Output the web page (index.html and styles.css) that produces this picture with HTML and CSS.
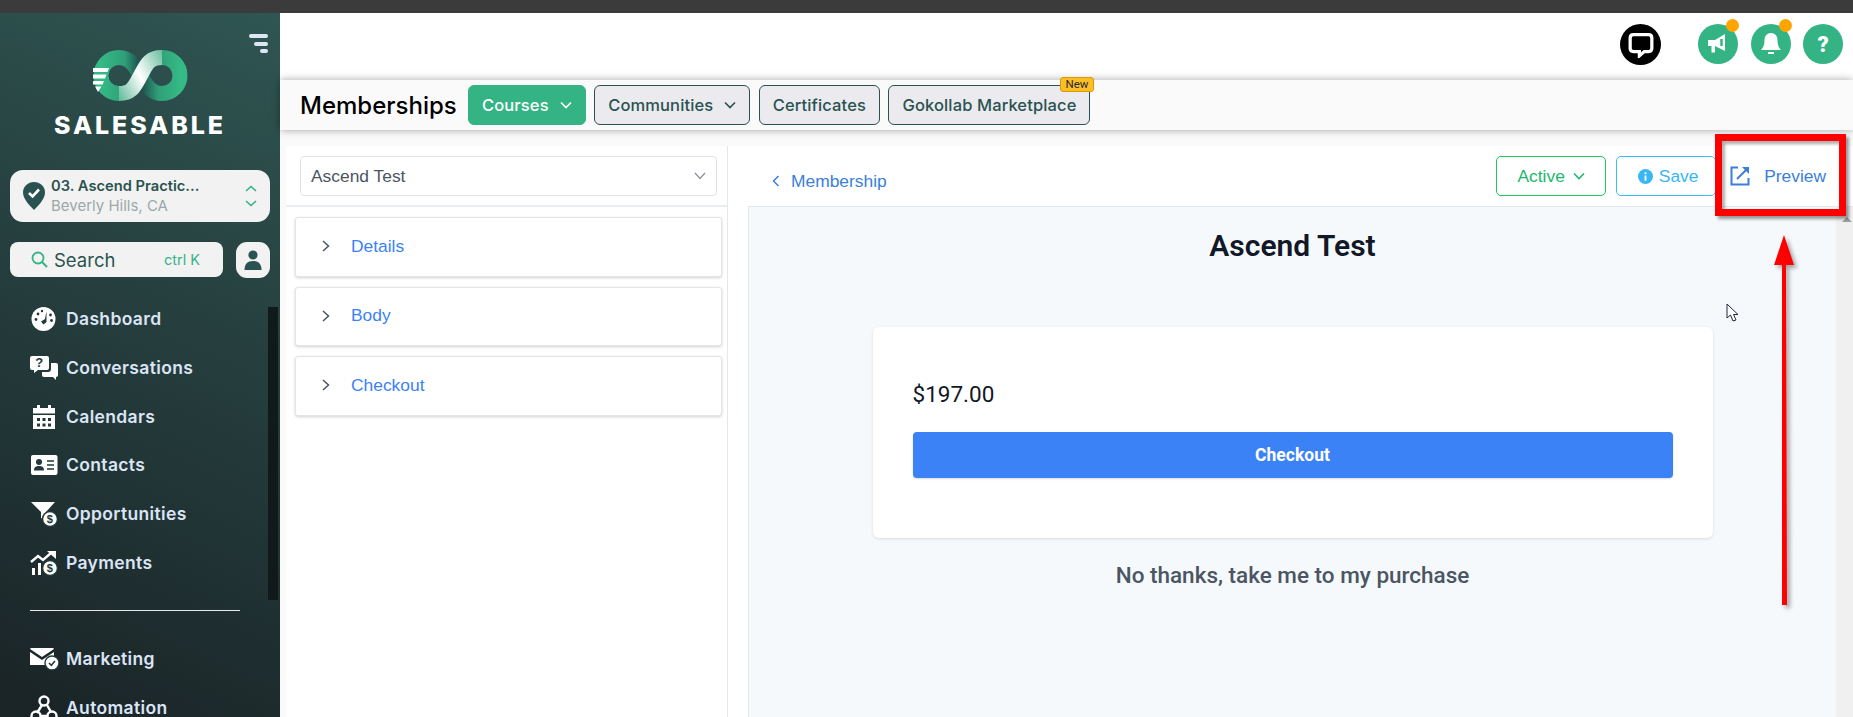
FILE: index.html
```html
<!DOCTYPE html>
<html lang="en">
<head>
  <meta charset="UTF-8" />
  <title>Memberships</title>
  <link rel="stylesheet" href="styles.css">
</head>
<body>

  <div class="window-bar"></div>

  <div class="app">

    <!-- Sidebar -->
    <aside class="sidebar">
      <svg class="side-toggle" viewBox="0 0 19 19" width="19" height="19">
        <rect x="0" y="0" width="19" height="4" rx="2" fill="#dfe7f5"/>
        <rect x="5" y="8" width="14" height="4" rx="2" fill="#dfe7f5"/>
        <rect x="11" y="15" width="8" height="4" rx="2" fill="#dfe7f5"/>
      </svg>

      <div class="brand">
        <svg class="brand-logo" viewBox="0 0 95 51" width="95" height="51">
          <defs>
            <linearGradient id="loopLeft" x1="0" y1="0" x2="1" y2="0">
              <stop offset="0" stop-color="#35b985"/>
              <stop offset="0.6" stop-color="#2f9f78"/>
              <stop offset="1" stop-color="#1d4a4a"/>
            </linearGradient>
            <linearGradient id="loopRight" x1="0" y1="0" x2="1" y2="0">
              <stop offset="0" stop-color="#1d4a4a"/>
              <stop offset="0.45" stop-color="#2f9f78"/>
              <stop offset="1" stop-color="#35b985"/>
            </linearGradient>
            <linearGradient id="band" gradientUnits="userSpaceOnUse" x1="14" y1="43" x2="80" y2="8">
              <stop offset="0" stop-color="#3aa981"/>
              <stop offset="0.5" stop-color="#ffffff"/>
              <stop offset="1" stop-color="#4db28d"/>
            </linearGradient>
          </defs>
          <path d="M47.5 25.5C41 15 37 7.5 26 7.5A18 18 0 0 0 26 43.5" fill="none" stroke="url(#loopLeft)" stroke-width="15"/>
          <path d="M69 7.5A18 18 0 0 1 69 43.5C58 43.5 54 36 47.5 25.5" fill="none" stroke="url(#loopRight)" stroke-width="15"/>
          <path d="M26 43.5C40 43.5 42 35 47.5 25.5C53 16 55 7.5 69 7.5" fill="none" stroke="url(#band)" stroke-width="15"/>
          <path d="M0 18H16L14.5 22H0ZM0 24.5H13.5L12 28.5H0ZM0 31H11L9.5 34.5H0ZM2 36.5H8.5L5 42Z" fill="#fff"/>
        </svg>
        <div class="brand-name">SALESABLE</div>
      </div>

      <div class="location">
        <svg viewBox="0 0 22 28" width="22" height="28">
          <path d="M11 0C5 0 0 4.6 0 10.5C0 17 7 24 11 28C15 24 22 17 22 10.5C22 4.6 17 0 11 0Z" fill="#2a5250"/>
          <path d="M6 11L9.6 14.5L16 7.5" fill="none" stroke="#fff" stroke-width="2.6"/>
        </svg>
        <div class="location-text">
          <div class="location-name">03. Ascend Practic...</div>
          <div class="location-city">Beverly Hills, CA</div>
        </div>
        <svg class="location-arrows" viewBox="0 0 12 22" width="12" height="22">
          <path d="M1 6L6 1.5L11 6M1 16L6 20.5L11 16" fill="none" stroke="#34b484" stroke-width="1.6"/>
        </svg>
      </div>

      <div class="search-row">
        <div class="search">
          <svg viewBox="0 0 17 17" width="17" height="17">
            <circle cx="7" cy="7" r="5.5" fill="none" stroke="#34b484" stroke-width="1.8"/>
            <path d="M11 11L16 16" stroke="#34b484" stroke-width="2"/>
          </svg>
          <span class="search-label">Search</span>
          <span class="search-key">ctrl K</span>
        </div>
        <div class="user-btn">
          <svg viewBox="0 0 18 20" width="18" height="20">
            <circle cx="9" cy="5" r="4.6" fill="#2a5250"/>
            <path d="M0.5 20C0.5 14 3.5 11 9 11C14.5 11 17.5 14 17.5 20Z" fill="#2a5250"/>
          </svg>
        </div>
      </div>

      <nav class="nav">
        <div class="nav-item">
          <svg viewBox="0 0 28 28" width="28" height="28">
            <circle cx="13.5" cy="14" r="12" fill="#fff"/>
            <path d="M16.5 6L15 14L11 16.5L13.5 19.5L16.5 17Z" fill="#22383a"/>
            <circle cx="6" cy="14.5" r="1.4" fill="#22383a"/>
            <circle cx="8" cy="9" r="1.4" fill="#22383a"/>
            <circle cx="12" cy="6" r="1.2" fill="#22383a"/>
            <circle cx="20.5" cy="10" r="1.4" fill="#22383a"/>
            <circle cx="21.5" cy="15.5" r="1.4" fill="#22383a"/>
          </svg>
          Dashboard
        </div>
        <div class="nav-item">
          <svg viewBox="0 0 30 26" width="30" height="26">
            <path d="M3 1H18Q20 1 20 3V13Q20 15 18 15H9L5 18V15H3Q1 15 1 13V3Q1 1 3 1Z" fill="#fff"/>
            <path d="M22 8H27Q29 8 29 10V20Q29 22 27 22V25L24 22H15Q13 22 13 20V17H19Q22 17 22 14Z" fill="#fff"/>
            <text x="10.5" y="12" class="icon-text">?</text>
          </svg>
          Conversations
        </div>
        <div class="nav-item">
          <svg viewBox="0 0 28 28" width="28" height="28">
            <path d="M7 2H10V5H18V2H21V5H25V10.5H3V5H7Z M3 12H25V26H3Z" fill="#fff"/>
            <g fill="#22383a">
              <rect x="7" y="15" width="3" height="3"/><rect x="12.5" y="15" width="3" height="3"/><rect x="18" y="15" width="3" height="3"/>
              <rect x="7" y="20.5" width="3" height="3"/><rect x="12.5" y="20.5" width="3" height="3"/><rect x="18" y="20.5" width="3" height="3"/>
            </g>
          </svg>
          Calendars
        </div>
        <div class="nav-item">
          <svg viewBox="0 0 28 22" width="28" height="22">
            <rect x="1" y="1" width="26.5" height="20" rx="2" fill="#fff"/>
            <circle cx="9" cy="8" r="3" fill="#22383a"/>
            <path d="M4 16.5C4 13 6 12 9 12C12 12 14 13 14 16.5Z" fill="#22383a"/>
            <path d="M17 7H24M17 11H24M17 15H24" stroke="#22383a" stroke-width="1.4"/>
          </svg>
          Contacts
        </div>
        <div class="nav-item">
          <svg viewBox="0 0 28 26" width="28" height="26">
            <path d="M1 1H25L16 11V20L11 17V11Z" fill="#fff"/>
            <circle cx="20" cy="18" r="7.5" fill="#fff" stroke="#22383a" stroke-width="1.5"/>
            <text x="20" y="22" class="icon-text icon-text-sm">$</text>
          </svg>
          Opportunities
        </div>
        <div class="nav-item">
          <svg viewBox="0 0 28 26" width="28" height="26">
            <path d="M1 12L8 6L13 10L21 3" fill="none" stroke="#fff" stroke-width="2.4"/>
            <path d="M17 1H26V9Z" fill="#fff"/>
            <rect x="2" y="18" width="3" height="7" fill="#fff"/>
            <rect x="8" y="13" width="3" height="12" fill="#fff"/>
            <circle cx="20" cy="18" r="7.5" fill="#fff" stroke="#22383a" stroke-width="1.5"/>
            <text x="20" y="22" class="icon-text icon-text-sm">$</text>
          </svg>
          Payments
        </div>
        <div class="nav-divider"></div>
        <div class="nav-item">
          <svg viewBox="0 0 30 24" width="30" height="24">
            <path d="M1 2Q1 1 3 1H23Q25 1 25 2L13 10Z" fill="#fff"/>
            <path d="M1 5L13 13L25 5V18H1Z" fill="#fff"/>
            <circle cx="23" cy="16" r="7" fill="#fff" stroke="#22383a" stroke-width="1.4"/>
            <path d="M20 16L22.3 18.3L26 14" fill="none" stroke="#22383a" stroke-width="1.5"/>
          </svg>
          Marketing
        </div>
        <div class="nav-item">
          <svg viewBox="0 0 28 28" width="28" height="28">
            <g fill="none" stroke="#fff" stroke-width="2.4">
              <circle cx="14" cy="7" r="4.5"/>
              <circle cx="6" cy="22" r="4.5"/>
              <circle cx="22" cy="22" r="4.5"/>
              <path d="M12 11L7 19M17 11L21 18M10 22H18"/>
            </g>
          </svg>
          Automation
        </div>
      </nav>

      <div class="side-scroll">
        <div class="side-scroll-thumb"></div>
      </div>
    </aside>

    <main class="main">

      <!-- Top icons -->
      <header class="topbar">
        <div class="chat-btn">
          <svg viewBox="0 0 24 24" width="26" height="26">
            <path d="M5 2.5H19Q22 2.5 22 5.5V15Q22 18 19 18H15L10.5 22V18H5Q2 18 2 15V5.5Q2 2.5 5 2.5Z" fill="none" stroke="#fff" stroke-width="3"/>
          </svg>
        </div>
        <div class="top-icons">
          <div class="round-btn has-dot">
            <svg viewBox="0 0 22 22" width="22" height="22">
              <path d="M1 7H8L18 1V18L8 13V19.5H4.5V13H1Z" fill="#fff"/>
              <path d="M14.5 6V13" stroke="#34b484" stroke-width="2.5"/>
            </svg>
          </div>
          <div class="round-btn has-dot">
            <svg viewBox="0 0 22 24" width="22" height="24">
              <path d="M11 1C7 1 4.5 4 4.5 8C4.5 13 3.5 15 1 18H21C18.5 15 17.5 13 17.5 8C17.5 4 15 1 11 1Z" fill="#fff"/>
              <path d="M8 21H14" stroke="#fff" stroke-width="2"/>
            </svg>
          </div>
          <div class="round-btn round-help">?</div>
        </div>
      </header>

      <!-- Tabs -->
      <div class="subnav">
        <h1 class="page-title">Memberships</h1>
        <div class="tabs">
          <div class="tab tab-active">Courses
            <svg viewBox="0 0 12 8" width="12" height="8"><path d="M1 1.5L6 6.5L11 1.5" fill="none" stroke="#fff" stroke-width="1.7"/></svg>
          </div>
          <div class="tab">Communities
            <svg viewBox="0 0 12 8" width="12" height="8"><path d="M1 1.5L6 6.5L11 1.5" fill="none" stroke="#2a5250" stroke-width="1.7"/></svg>
          </div>
          <div class="tab">Certificates</div>
          <div class="tab">Gokollab Marketplace<span class="tab-badge">New</span></div>
        </div>
      </div>

      <div class="content">

        <!-- Left column -->
        <section class="editor">
          <div class="editor-top">
            <div class="select">
              <span>Ascend Test</span>
              <svg viewBox="0 0 12 8" width="12" height="8"><path d="M1 1L6 6.5L11 1" fill="none" stroke="#8a919c" stroke-width="1.2"/></svg>
            </div>
          </div>
          <div class="accordions">
            <div class="accordion">
              <svg viewBox="0 0 8 12" width="8" height="12"><path d="M1 1L6.5 6L1 11" fill="none" stroke="#4b5563" stroke-width="1.5"/></svg>
              <span>Details</span>
            </div>
            <div class="accordion accordion-short">
              <svg viewBox="0 0 8 12" width="8" height="12"><path d="M1 1L6.5 6L1 11" fill="none" stroke="#4b5563" stroke-width="1.5"/></svg>
              <span>Body</span>
            </div>
            <div class="accordion">
              <svg viewBox="0 0 8 12" width="8" height="12"><path d="M1 1L6.5 6L1 11" fill="none" stroke="#4b5563" stroke-width="1.5"/></svg>
              <span>Checkout</span>
            </div>
          </div>
        </section>

        <!-- Right column -->
        <section class="preview">
          <div class="preview-head">
            <div class="back-link">
              <svg viewBox="0 0 8 12" width="8" height="12"><path d="M6.5 1L1.5 6L6.5 11" fill="none" stroke="#3b7fd8" stroke-width="1.5"/></svg>
              Membership
            </div>
            <div class="actions">
              <div class="btn-active">Active
                <svg viewBox="0 0 12 8" width="12" height="8"><path d="M1 1.5L6 6.5L11 1.5" fill="none" stroke="#1cb96c" stroke-width="1.6"/></svg>
              </div>
              <div class="btn-save">
                <svg viewBox="0 0 16 16" width="15" height="15">
                  <circle cx="8" cy="8" r="8" fill="#38b6f5"/>
                  <rect x="7" y="7" width="2" height="5.5" fill="#fff"/>
                  <rect x="7" y="3.5" width="2" height="2" fill="#fff"/>
                </svg>
                Save
              </div>
              <div class="btn-preview">
                <svg viewBox="0 0 20 20" width="20" height="20">
                  <path d="M8 1.5H1.5V18.5H18.5V12" fill="none" stroke="#3b7fd8" stroke-width="2"/>
                  <path d="M12 1H19V8Z" fill="#3b7fd8"/>
                  <path d="M16 4L7 13" stroke="#3b7fd8" stroke-width="2"/>
                </svg>
                Preview
              </div>
            </div>
          </div>

          <div class="preview-frame">
            <div class="preview-page">
              <h2 class="offer-title">Ascend Test</h2>
              <div class="offer-card">
                <div class="offer-price">$197.00</div>
                <button class="offer-btn">Checkout</button>
              </div>
              <div class="offer-skip">No thanks, take me to my purchase</div>
            </div>
            <div class="page-scroll"><div class="page-scroll-up"></div></div>
          </div>
        </section>
      </div>
    </main>
  </div>

  <!-- Annotations drawn over the screenshot -->
  <div class="mark-box"></div>
  <svg class="mark-arrow" viewBox="0 0 22 372" width="22" height="372">
    <path d="M11 0L21 30H13L14 370H9L9 30H1Z" fill="#ff0000"/>
  </svg>
  <svg class="mouse" viewBox="0 0 13 20" width="13" height="20">
    <path d="M1 1V15L4.5 12L7 18L10 17L7.5 11.5H12Z" fill="#fff" stroke="#1f2937" stroke-width="1"/>
  </svg>

</body>
</html>
```

FILE: styles.css
```css
* {
  box-sizing: border-box;
}

html, body {
  height: 717px;
}

body {
  margin: 0;
  overflow: hidden;
  font-family: "Liberation Sans", Arial, sans-serif;
  background: #fff;
  display: flex;
  flex-direction: column;
  position: relative;
}

.window-bar {
  height: 13px;
  background: #3b3b3b;
  flex: none;
}

.app {
  display: flex;
  flex: 1;
  min-height: 0;
}

/* Sidebar */
.sidebar {
  width: 280px;
  flex: none;
  position: relative;
  overflow: hidden;
  background: linear-gradient(205deg, #2f5653 0%, #26403f 40%, #1a2326 100%);
  font-family: Inter, sans-serif;
  padding: 37px 10px 0;
}

.side-toggle {
  position: absolute;
  top: 21px;
  right: 12px;
}

.brand {
  display: flex;
  flex-direction: column;
  align-items: center;
}

.brand-logo {
  margin-left: 1px;
}

.brand-name {
  margin-top: 9px;
  font-size: 25px;
  line-height: 30px;
  font-weight: 800;
  letter-spacing: 2.9px;
  color: #fff;
}

.location {
  margin-top: 30px;
  height: 52px;
  background: #f2f2f2;
  border-radius: 13px;
  display: flex;
  align-items: center;
  padding: 0 13px;
  gap: 6px;
}

.location-text {
  flex: 1;
}

.location-name {
  font-size: 14.7px;
  line-height: 19px;
  font-weight: 600;
  color: #2a5250;
}

.location-city {
  font-size: 15px;
  line-height: 19px;
  color: #9aa9a8;
}

.search-row {
  margin-top: 20px;
  display: flex;
  justify-content: space-between;
}

.search {
  width: 213px;
  height: 35px;
  background: #f2f2f2;
  border-radius: 8px;
  display: flex;
  align-items: center;
  padding: 0 23px 0 21px;
  gap: 6px;
}

.search-label {
  flex: 1;
  font-size: 18.5px;
  color: #2a5250;
}

.search-key {
  font-size: 14.5px;
  color: #34b484;
}

.user-btn {
  width: 34px;
  height: 36px;
  background: #f2f2f2;
  border-radius: 11px;
  display: flex;
  align-items: center;
  justify-content: center;
}

.nav {
  margin-top: 17px;
  padding-left: 19px;
}

.nav-item {
  height: 48.7px;
  display: flex;
  align-items: center;
  gap: 7px;
  font-size: 17.5px;
  line-height: 18px;
  font-weight: 600;
  letter-spacing: 0.35px;
  color: #dbe5f5;
  white-space: nowrap;
}

.nav-item svg {
  width: 30px;
  flex: none;
}

.nav-divider {
  width: 210px;
  height: 1px;
  background: #e5e7eb;
  margin: 23px 0 24px 1px;
}

.icon-text {
  font-family: "Liberation Sans", sans-serif;
  font-size: 13px;
  font-weight: 700;
  fill: #22383a;
  text-anchor: middle;
}

.icon-text-sm {
  font-size: 11px;
}

.side-scroll {
  position: absolute;
  top: 280px;
  right: 0;
  bottom: 0;
  width: 14px;
  padding: 14px 2px 0;
}

.side-scroll-thumb {
  height: 293px;
  background: #101a1a;
}

/* Main */
.main {
  flex: 1;
  min-width: 0;
  display: flex;
  flex-direction: column;
  background: #fafafa;
}

.topbar {
  height: 67px;
  flex: none;
  background: #fff;
  display: flex;
  align-items: flex-start;
  justify-content: flex-end;
  padding: 11px 10px 0 0;
}

.chat-btn {
  width: 41px;
  height: 41px;
  border-radius: 50%;
  background: #000;
  display: flex;
  align-items: center;
  justify-content: center;
  margin-right: 37px;
}

.top-icons {
  display: flex;
  gap: 12.5px;
}

.round-btn {
  width: 40px;
  height: 40px;
  border-radius: 50%;
  background: #34b484;
  position: relative;
  display: flex;
  align-items: center;
  justify-content: center;
}

.round-help {
  font-family: Roboto, sans-serif;
  font-size: 22px;
  font-weight: 900;
  color: #fff;
}

.has-dot::after {
  content: "";
  position: absolute;
  top: -5px;
  right: -1px;
  width: 13px;
  height: 13px;
  border-radius: 50%;
  background: #ffa500;
}

.subnav {
  height: 50px;
  flex: none;
  background: #fafafa;
  box-shadow: 0 0 8px rgba(0, 0, 0, 0.35);
  display: flex;
  align-items: center;
  padding-left: 20px;
  font-family: Inter, sans-serif;
  position: relative;
}

.page-title {
  margin: 0;
  width: 168px;
  font-size: 24px;
  font-weight: 500;
  color: #000;
}

.tabs {
  display: flex;
  gap: 8.5px;
}

.tab {
  height: 40px;
  padding: 0 13px;
  display: flex;
  align-items: center;
  gap: 11px;
  border: 1px solid #2a5250;
  border-radius: 6px;
  background: #ebebef;
  color: #2a5250;
  font-size: 16.5px;
  font-weight: 500;
  letter-spacing: 0.12px;
  position: relative;
  white-space: nowrap;
}

.tab-active {
  background: #34b484;
  border-color: #34b484;
  color: #fff;
}

.tab-badge {
  position: absolute;
  top: -9px;
  right: -5px;
  height: 15px;
  padding: 0 5px;
  background: #fbbf24;
  border: 1px solid #d99a06;
  border-radius: 3px;
  font-family: Roboto, sans-serif;
  font-size: 11.5px;
  line-height: 13px;
  font-weight: 400;
  letter-spacing: 0;
  color: #1f2937;
}

.content {
  flex: 1;
  min-height: 0;
  display: flex;
  padding-top: 16px;
}

/* Left column */
.editor {
  width: 442px;
  flex: none;
  margin-left: 6px;
  background: #fff;
  border-right: 1px solid #e2e8f0;
}

.editor-top {
  height: 61px;
  padding: 10px 10px 0 14px;
  border-bottom: 2px solid #e7edf3;
}

.select {
  height: 40px;
  padding: 0 10px;
  border: 1px solid #dfe3e8;
  border-radius: 4px;
  display: flex;
  align-items: center;
  justify-content: space-between;
  font-size: 17.4px;
  color: #4b5563;
}

.accordions {
  padding: 10px 5px 0 9px;
  display: flex;
  flex-direction: column;
  gap: 10px;
}

.accordion {
  height: 60px;
  display: flex;
  align-items: center;
  gap: 21px;
  padding: 0 0 2px 26px;
  border: 1px solid #e2e5ea;
  border-radius: 3px;
  box-shadow: 0 1px 3px rgba(0, 0, 0, 0.18);
  background: #fff;
  font-size: 17.4px;
  color: #3b82f6;
}

.accordion-short {
  height: 59px;
}

/* Right column */
.preview {
  flex: 1;
  min-width: 0;
  background: #fff;
  display: flex;
  flex-direction: column;
}

.preview-head {
  height: 60px;
  flex: none;
  display: flex;
  justify-content: space-between;
  padding: 10px 27px 0 44px;
}

.back-link {
  display: flex;
  align-items: center;
  gap: 11px;
  height: 50px;
  font-size: 17.4px;
  color: #3b7fd8;
}

.actions {
  display: flex;
  align-items: flex-start;
  font-size: 17.4px;
}

.btn-active,
.btn-save {
  height: 40px;
  display: flex;
  align-items: center;
  justify-content: center;
  border-radius: 5px;
  background: #fff;
}

.btn-active {
  width: 110px;
  gap: 8px;
  border: 1px solid #22c55e;
  color: #1cb96c;
}

.btn-save {
  width: 100px;
  margin-left: 10px;
  gap: 6px;
  padding-left: 4px;
  border: 1px solid #38bdf8;
  color: #38b6f5;
}

.btn-preview {
  height: 40px;
  margin-left: 14px;
  display: flex;
  align-items: center;
  gap: 14px;
  color: #3b7fd8;
}

.preview-frame {
  flex: 1;
  min-height: 0;
  margin-left: 20px;
  display: flex;
  border-top: 1px solid #e2e8f0;
  border-left: 1px solid #e2e8f0;
}

.preview-page {
  flex: 1;
  background: #f6f9fc;
  font-family: Roboto, sans-serif;
  padding-top: 21px;
  text-align: center;
}

.offer-title {
  margin: 0;
  font-size: 30px;
  line-height: 36px;
  font-weight: 600;
  color: #111827;
}

.offer-card {
  width: 840px;
  height: 211px;
  margin: 63px auto 0;
  padding: 53px 40px 0;
  background: #fff;
  border-radius: 6px;
  box-shadow: 0 1px 3px rgba(0, 0, 0, 0.12);
  text-align: left;
}

.offer-price {
  font-size: 22.5px;
  line-height: 28px;
  font-weight: 400;
  color: #111827;
}

.offer-btn {
  display: block;
  width: 100%;
  height: 46px;
  margin-top: 24px;
  border: 0;
  border-radius: 4px;
  background: #3b82f6;
  box-shadow: 0 1px 2px rgba(0, 0, 0, 0.15);
  font-family: Roboto, sans-serif;
  font-size: 17.5px;
  font-weight: 700;
  color: #fff;
}

.offer-skip {
  margin-top: 22px;
  font-size: 22.5px;
  line-height: 30px;
  font-weight: 500;
  color: #4b5563;
}

.page-scroll {
  width: 17px;
  flex: none;
  background: #f0f0f0;
  padding: 10px 0 0 6px;
}

.page-scroll-up {
  width: 0;
  height: 0;
  border-left: 5px solid transparent;
  border-right: 5px solid transparent;
  border-bottom: 5px solid #a0a0a0;
}

/* Annotations */
.mark-box {
  position: absolute;
  left: 1715px;
  top: 134px;
  width: 131px;
  height: 82px;
  border: 7px solid #ff0000;
  box-shadow: 3px 3px 3px rgba(0, 0, 0, 0.4), inset 3px 3px 3px rgba(0, 0, 0, 0.3);
}

.mark-arrow {
  position: absolute;
  left: 1773px;
  top: 235px;
  filter: drop-shadow(3px 3px 2px rgba(0, 0, 0, 0.35));
}

.mouse {
  position: absolute;
  left: 1726px;
  top: 303px;
}
```
